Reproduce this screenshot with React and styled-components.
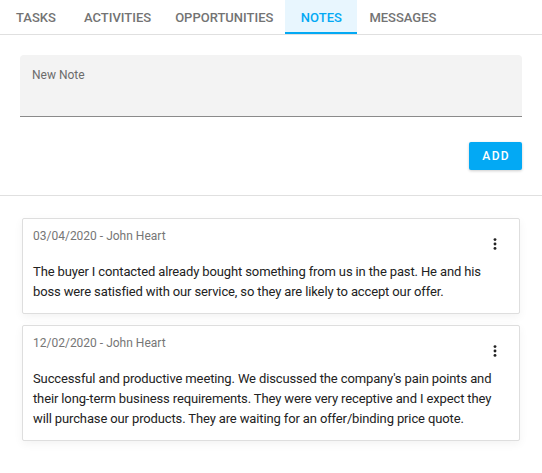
import React from 'react'
import styled, { createGlobalStyle } from 'styled-components';

const notes = [
  {
    id: 1,
    date: '03/04/2020',
    author: 'John Heart',
    text: 'The buyer I contacted already bought something from us in the past. He and his boss were satisfied with our service, so they are likely to accept our offer.',
  },
  {
    id: 2,
    date: '12/02/2020',
    author: 'John Heart',
    text: "Successful and productive meeting. We discussed the company's pain points and their long-term business requirements. They were very receptive and I expect they will purchase our products. They are waiting for an offer/binding price quote.",
  },
];

const tabs = ['Tasks', 'Activities', 'Opportunities', 'Notes', 'Messages'];

const MoreIcon = () => (
  <svg width="24" height="24" viewBox="0 0 24 24">
    <circle cx="12" cy="7.6" r="1.45" fill="#222" />
    <circle cx="12" cy="12" r="1.45" fill="#222" />
    <circle cx="12" cy="16.4" r="1.45" fill="#222" />
  </svg>
);

const App = () => {
  return (
    <Page>
      <GlobalStyle />
      <TabBar>
        {tabs.map((t) => (
          <Tab key={t} $active={t === 'Notes'}>{t}</Tab>
        ))}
      </TabBar>
      <Composer>
        <Field>
          <Label>New Note</Label>
          <Input />
        </Field>
        <Actions>
          <AddButton>Add</AddButton>
        </Actions>
      </Composer>
      <NoteList>
        {notes.map((n) => (
          <Card key={n.id}>
            <CardHeader>
              <Meta>{n.date} - {n.author}</Meta>
              <MenuButton>
                <MoreIcon />
              </MenuButton>
            </CardHeader>
            <Body>{n.text}</Body>
          </Card>
        ))}
      </NoteList>
    </Page>
  );
};

export default App;

const GlobalStyle = createGlobalStyle`
body{
  margin:0;
  background:#fff;
  font-family: Roboto, "Liberation Sans", sans-serif;
}
`;

const Page = styled.div`
  width:100%;
  background:#fff;
`;

const TabBar = styled.div`
  display:flex;
  border-bottom:1px solid #e0e0e0;
`;

const Tab = styled.div`
  min-width:72px;
  height:34px;
  padding:0 12px;
  box-sizing:border-box;
  display:flex;
  align-items:center;
  justify-content:center;
  font-size:13px;
  font-weight:500;
  text-transform:uppercase;
  color:${(p) => (p.$active ? '#03a9f4' : '#737373')};
  background:${(p) => (p.$active ? '#e8f6fe' : 'transparent')};
  box-shadow:${(p) => (p.$active ? 'inset 0 -2px 0 #03a9f4' : 'none')};
  cursor:pointer;
`;

const Composer = styled.div`
  padding:20px 20px 25px;
  border-bottom:1px solid #e0e0e0;
`;

const Field = styled.div`
  background:#f3f3f3;
  border-radius:4px 4px 0 0;
  border-bottom:1px solid #8a8a8a;
  padding:12px 12px 0;
  box-sizing:border-box;
  height:62px;
  display:flex;
  flex-direction:column;
`;

const Label = styled.div`
  font-size:12px;
  line-height:16px;
  color:#6b6b6b;
`;

const Input = styled.textarea`
  flex:1;
  border:none;
  background:transparent;
  resize:none;
  outline:none;
  font-family:inherit;
  font-size:13px;
  padding:0;
`;

const Actions = styled.div`
  display:flex;
  justify-content:flex-end;
  margin-top:25px;
`;

const AddButton = styled.button`
  width:53px;
  height:28px;
  padding:0 0 0 1.4px;
  border:none;
  border-radius:2px;
  background:#03a9f4;
  color:#fff;
  font-family:inherit;
  font-size:12px;
  font-weight:500;
  letter-spacing:1.4px;
  text-transform:uppercase;
  box-shadow:0 1px 3px rgba(0,0,0,0.2);
  cursor:pointer;
`;

const NoteList = styled.div`
  display:flex;
  flex-direction:column;
  gap:11px;
  padding:22px 22px 20px;
`;

const Card = styled.div`
  border:1px solid #dedede;
  border-radius:2px;
  background:#fff;
  padding:9px 10px 11px;
  box-shadow:0 3px 10px rgba(0,0,0,0.05);
`;

const CardHeader = styled.div`
  display:flex;
  justify-content:space-between;
  align-items:flex-start;
`;

const Meta = styled.div`
  font-size:12px;
  line-height:16px;
  color:#767676;
`;

const MenuButton = styled.button`
  width:24px;
  height:24px;
  margin:4px 2px 0 0;
  padding:0;
  border:none;
  background:none;
  display:flex;
  align-items:center;
  justify-content:center;
  cursor:pointer;
`;

const Body = styled.div`
  margin-top:6px;
  font-size:13px;
  line-height:20px;
  letter-spacing:-0.13px;
  color:#222;
`;
